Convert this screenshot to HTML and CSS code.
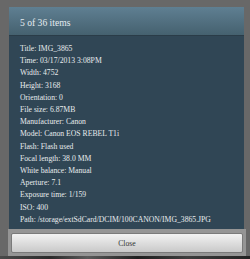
FILE: index.html
```html
<!DOCTYPE html>
<html lang="en">

<head>
    <meta charset="UTF-8">
    <meta name="viewport" content="width=device-width, initial-scale=1.0">
    <title>Details</title>
    <link rel="stylesheet" href="styles.css">
</head>

<body>

    <!-- Details Dialog -->
    <div class="dialog">
        <div class="dialog-header">5 of 36 items</div>

        <div class="dialog-body">
            <p>Title: IMG_3865</p>
            <p>Time: 03/17/2013 3:08PM</p>
            <p>Width: 4752</p>
            <p>Height: 3168</p>
            <p>Orientation: 0</p>
            <p>File size: 6.87MB</p>
            <p>Manufacturer: Canon</p>
            <p>Model: Canon EOS REBEL T1i</p>
            <p>Flash: Flash used</p>
            <p>Focal length: 38.0 MM</p>
            <p>White balance: Manual</p>
            <p>Aperture: 7.1</p>
            <p>Exposure time: 1/159</p>
            <p>ISO: 400</p>
            <p>Path: /storage/extSdCard/DCIM/100CANON/IMG_3865.JPG</p>
        </div>

        <div class="dialog-footer">
            <button class="close-btn">Close</button>
        </div>
    </div>

    <!-- Photo strip behind the dialog -->
    <div class="photo-strip"></div>

</body>

</html>
```

FILE: styles.css
```css
/* General Reset */
* {
    margin: 0;
    padding: 0;
    box-sizing: border-box;
}

body {
    font-family: "Liberation Serif", "DejaVu Serif", serif;
    background-color: #686868;
    width: 250px;
    height: 259px;
    overflow: hidden;
    padding-top: 7px;
}

/* Dialog */
.dialog {
    margin-left: 9px;
    width: 235px;
}

.dialog-header {
    height: 29px;
    padding-left: 11px;
    padding-top: 10px;
    font-size: 9.6px;
    color: #e4ecf0;
    background: linear-gradient(to bottom, #5f7f92, #45616f);
    border-bottom: 1px solid #2a3c48;
}

.dialog-body {
    background-color: #304655;
    padding: 7px 11px 4px 11px;
    height: 193px;
}

.dialog-body p {
    font-size: 7.7px;
    line-height: 12.2px;
    color: #e8ecee;
    white-space: nowrap;
}

/* Footer */
.dialog-footer {
    background-color: #959595;
    padding: 4px 3px 3px 3px;
    margin-left: -1px;
    width: 238px;
}

.close-btn {
    display: block;
    width: 100%;
    height: 20px;
    font-family: "Liberation Serif", "DejaVu Serif", serif;
    font-size: 7.7px;
    color: #333;
    background: linear-gradient(to bottom, #f2f2f2, #c9c9c9);
    border: 1px solid #7a7a7a;
    border-radius: 2px;
}

.photo-strip {
    height: 6px;
    background: linear-gradient(to right, #4a4a4a, #2a2a2a 20%, #5a5a5a 35%, #1f1f1f 55%, #3d3d3d 75%, #222 100%);
}
```
